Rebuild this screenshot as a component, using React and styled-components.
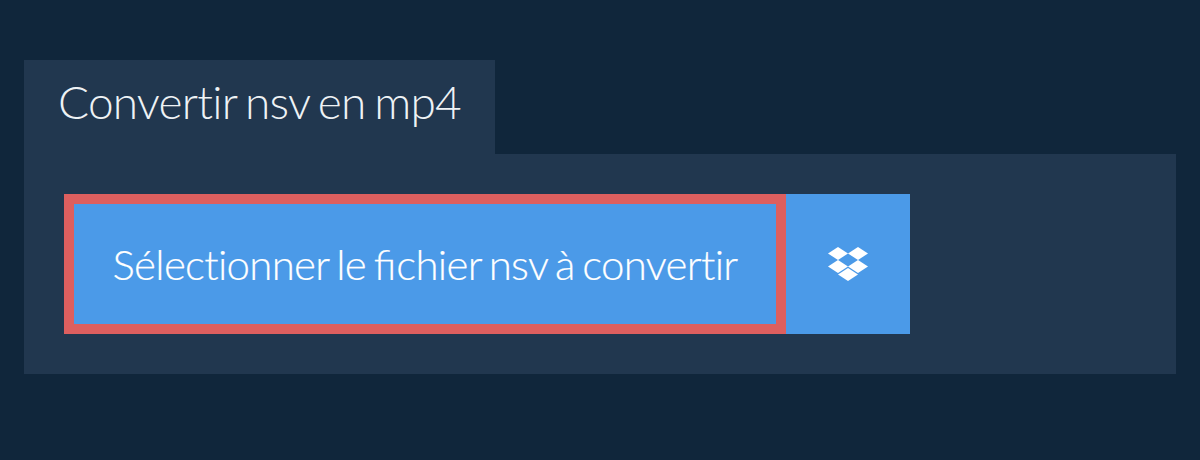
import React from "react";
import styled, { createGlobalStyle } from "styled-components";

const Global = createGlobalStyle`
  html, body { margin: 0; padding: 0; background: #10263b; }
`;
const Page = styled.div`
  box-sizing: border-box;
  width: 1200px;
  height: 460px;
  padding: 60px 24px 0;
  font-family: Lato, "Liberation Sans", sans-serif;
`;
const Tab = styled.h1`
  display: block;
  width: 471px;
  height: 94px;
  margin: 0;
  box-sizing: border-box;
  padding: 0 0 0 34px;
  background: #21374f;
  color: #eef2f5;
  font-size: 46px;
  font-weight: 300;
  line-height: 84px;
  letter-spacing: -0.78px;
  word-spacing: -3px;
  white-space: nowrap;
`;
const Panel = styled.div`
  display: flex;
  height: 220px;
  box-sizing: border-box;
  padding: 40px;
  background: #21374f;
`;
const SelectButton = styled.button`
  box-sizing: border-box;
  width: 722px;
  height: 140px;
  border: 10px solid #dd5f5f;
  background: #4b9ae8;
  color: #fff;
  font: 300 42px Lato, "Liberation Sans", sans-serif;
  letter-spacing: -0.7px;
  word-spacing: -3px;
  -webkit-text-stroke: 0.2px #fff;
  padding: 0;
  white-space: nowrap;
`;
const Ligature = styled.span`
  letter-spacing: 0;
`;
const DropboxButton = styled.button`
  display: flex;
  align-items: center;
  justify-content: center;
  width: 124px;
  height: 140px;
  border: 0;
  padding: 0;
  background: #4b9ae8;
`;
const DropboxIcon = styled.svg`
  width: 40px;
  height: 34px;
  fill: #fff;
`;

export default function App() {
  return (
    <Page>
      <Global />
      <Tab>Convertir nsv en mp4</Tab>
      <Panel>
        <SelectButton>Sélectionner le <Ligature>fi</Ligature>chier nsv à convertir</SelectButton>
        <DropboxButton aria-label="Dropbox">
          <DropboxIcon viewBox="0 0 40 34">
            <path d="M10 0 20 6.5 10 13 0 6.5Z" />
            <path d="M30 0 40 6.5 30 13 20 6.5Z" />
            <path d="M10 13 20 19.5 10 26 0 19.5Z" />
            <path d="M30 13 40 19.5 30 26 20 19.5Z" />
            <path d="M20 21 30 27.5 20 34 10 27.5Z" />
          </DropboxIcon>
        </DropboxButton>
      </Panel>
    </Page>
  );
}
